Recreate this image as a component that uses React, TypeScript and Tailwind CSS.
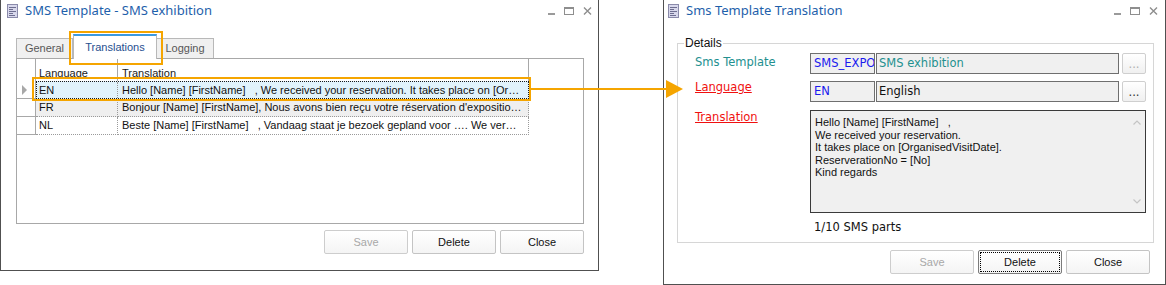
import React from "react";

const T = "font-['Liberation_Sans',Arial,sans-serif] text-[11px]";
const V = "font-['DejaVu_Sans',Verdana,sans-serif] text-[11.5px]";
const TITLE = "font-['Noto_Sans',sans-serif] text-[13px] text-[#1e5fab]";

function DocIcon() {
  return (
    <svg width="11" height="14" viewBox="0 0 11 14" className="shrink-0">
      <rect x="0.5" y="0.5" width="10" height="13" fill="#d8d8ec" stroke="#8a8aaa" />
      <path d="M2 3.5h7M2 5.5h4M2 7.5h7M2 9.5h4M2 11.5h6" stroke="#6e6e90" strokeWidth="1" />
    </svg>
  );
}

function Controls() {
  return (
    <div className="flex items-center">
      <svg width="8" height="10" viewBox="0 0 8 10">
        <rect x="0" y="7" width="7" height="2" fill="#9a9a9a" />
      </svg>
      <svg width="10" height="10" viewBox="0 0 10 10" className="ml-[8px]">
        <rect x="0.5" y="1.5" width="9" height="7" fill="none" stroke="#8e8e8e" />
        <rect x="0" y="1" width="10" height="2" fill="#8e8e8e" />
      </svg>
      <svg width="9" height="10" viewBox="0 0 9 10" className="ml-[9px]">
        <path d="M1 1.5l7 7M8 1.5l-7 7" stroke="#8e8e8e" strokeWidth="1.4" />
      </svg>
    </div>
  );
}

function Btn({
  label,
  disabled,
  focused,
}: {
  label: string;
  disabled?: boolean;
  focused?: boolean;
}) {
  return (
    <div
      className={`w-[84px] h-[24px] flex items-center justify-center rounded-[2px] border bg-linear-to-b from-white to-[#f4f4f4] ${T} ${
        disabled ? "text-[#a8a8a8] border-[#cdcdcd]" : "text-[#111]"
      } ${focused ? "border-[#7c7c7c] outline-1 outline-dotted outline-black outline-offset-[-3px]" : disabled ? "" : "border-[#c4c4c4]"}`}
    >
      {label}
    </div>
  );
}

const rows = [
  {
    lang: "EN",
    text: "Hello [Name] [FirstName]   , We received your reservation. It takes place on [Or…",
  },
  {
    lang: "FR",
    text: "Bonjour [Name] [FirstName], Nous avons bien reçu votre réservation d'expositio…",
  },
  {
    lang: "NL",
    text: "Beste [Name] [FirstName]   , Vandaag staat je bezoek gepland voor …. We ver…",
  },
];

function LeftWindow() {
  return (
    <div className="w-[599px] h-[271px] shrink-0 border-x border-b border-[#505050] flex flex-col">
      <div className="h-[22px] flex items-center pl-[6px] pr-[6px]">
        <DocIcon />
        <span className={`ml-[7px] ${TITLE} whitespace-nowrap`}>SMS Template - SMS exhibition</span>
        <div className="ml-auto">
          <Controls />
        </div>
      </div>
      <div className="mt-[12px] ml-[15px] mr-[14px]">
        <div className="h-[24px] flex items-end">
          <div className={`w-[57px] h-[20px] border-t border-x border-[#b8b8b8] bg-[#f0f0f0] flex items-center justify-center text-[#575757] ${T}`}>
            General
          </div>
          <div className={`relative z-10 -mb-[1px] w-[84px] h-[25px] border-x border-[#b8b8b8] border-t-2 border-t-[#3a9ae2] bg-white flex items-center justify-center pb-[1px] text-[#1f4f8f] ${T}`}>
            Translations
          </div>
          <div className={`w-[57px] h-[20px] border-t border-r border-[#b8b8b8] bg-[#f0f0f0] flex items-center justify-center text-[#575757] ${T}`}>
            Logging
          </div>
        </div>
        <div className="h-[166px] border border-[#a8a8a8] bg-white">
          <div className={`h-[22px] flex ${T} text-[#1a1a1a]`}>
            <div className="w-[19px] h-full border-r border-[#a8a8a8]" />
            <div className="w-[82px] h-full border-r border-[#a8a8a8] pl-[3px] pt-[6px]">Language</div>
            <div className="w-[411px] h-full border-r border-[#a8a8a8] pl-[4px] pt-[6px]">Translation</div>
          </div>
          {rows.map((r, i) => (
            <div key={r.lang} className={`h-[18px] flex ${T} text-[#111]`}>
              <div className="w-[19px] h-full border-r border-b border-[#a8a8a8] flex items-center pl-[5px]">
                {i === 0 && (
                  <svg width="6" height="10" viewBox="0 0 6 10">
                    <polygon points="0,0 5,5 0,10" fill="#a8a8a8" />
                  </svg>
                )}
              </div>
              {i === 0 ? (
                <div className="w-[493px] h-full flex border border-dotted border-[#1a1a1a] bg-[#e1f3fc]">
                  <div className="w-[81px] h-full border-r border-dotted border-[#9a9a9a] pl-[2px] flex items-center">
                    {r.lang}
                  </div>
                  <div className="flex-1 h-full pl-[4px] flex items-center whitespace-pre overflow-hidden">
                    {r.text}
                  </div>
                </div>
              ) : (
                <div className={`w-[493px] h-full flex ${i === 1 ? "bg-[#efefef]" : "bg-white"}`}>
                  <div className="w-[82px] h-full border-r border-b border-dotted border-[#9a9a9a] pl-[3px] flex items-center">
                    {r.lang}
                  </div>
                  <div className="w-[411px] h-full border-r border-b border-dotted border-[#9a9a9a] pl-[4px] flex items-center whitespace-pre overflow-hidden">
                    {r.text}
                  </div>
                </div>
              )}
            </div>
          ))}
        </div>
      </div>
      <div className="mt-[6px] flex justify-end gap-[4px] pr-[14px]">
        <Btn label="Save" disabled />
        <Btn label="Delete" />
        <Btn label="Close" />
      </div>
    </div>
  );
}

function Ellipsis({ enabled }: { enabled?: boolean }) {
  return (
    <div
      className={`w-[24px] h-[21px] rounded-[2px] border border-[#cfcfcf] bg-linear-to-b from-white to-[#f0f0f0] flex items-end justify-center pb-[3px] ${V} leading-[11px] ${
        enabled ? "text-[#333]" : "text-[#b0b0b0]"
      }`}
    >
      ...
    </div>
  );
}

function RightWindow() {
  return (
    <div className="ml-[64px] w-[503px] h-[285px] shrink-0 border-x border-b border-[#505050] flex flex-col">
      <div className="h-[22px] flex items-center pl-[4px] pr-[7px]">
        <DocIcon />
        <span className={`ml-[7px] ${TITLE} whitespace-nowrap`}>Sms Template Translation</span>
        <div className="ml-auto">
          <Controls />
        </div>
      </div>
      <div className="relative mt-[21px] ml-[13px] mr-[11px] h-[200px] border border-[#d6d6d6] flex flex-col pl-[17px] pr-[6px]">
        <span className={`absolute left-[6px] -top-[7px] bg-white px-[1px] leading-[13px] ${T} text-[12px] text-[#111]`}>
          Details
        </span>
        <div className="mt-[9px] h-[21px] flex">
          <div className={`w-[115px] pt-[3px] leading-[13px] ${V} text-[#23908f]`}>Sms Template</div>
          <div className={`w-[65px] h-[21px] border border-[#6f6f6f] bg-[#f0f0f0] pl-[3px] flex items-center overflow-hidden whitespace-nowrap ${V} text-[#1a1aee]`}>
            SMS_EXPO
          </div>
          <div className={`ml-[1px] w-[243px] h-[21px] border border-[#6f6f6f] bg-[#f0f0f0] pl-[2px] flex items-center ${V} text-[#23908f]`}>
            SMS exhibition
          </div>
          <div className="ml-[3px]">
            <Ellipsis />
          </div>
        </div>
        <div className="mt-[7px] h-[21px] flex">
          <div className={`w-[115px] pt-0 leading-[13px] ${V} text-[#f01010] underline`}>Language</div>
          <div className={`w-[65px] h-[21px] border border-[#6f6f6f] bg-[#f0f0f0] pl-[3px] flex items-center ${V} text-[#1a1aee]`}>
            EN
          </div>
          <div className={`ml-[1px] w-[243px] h-[21px] border border-[#6f6f6f] bg-[#f0f0f0] pl-[2px] flex items-center ${V} text-[#111]`}>
            English
          </div>
          <div className="ml-[3px]">
            <Ellipsis enabled />
          </div>
        </div>
        <div className="mt-[8px] flex">
          <div className={`w-[115px] pt-[1px] leading-[13px] ${V} text-[#f01010] underline`}>Translation</div>
          <div className="w-[336px] h-[103px] border border-[#3a3a3a] bg-[#f0f0f0] flex">
            <div className={`flex-1 pl-[4px] pt-[5px] leading-[12.5px] whitespace-pre ${T} text-[#111]`}>
              {"Hello [Name] [FirstName]   ,\nWe received your reservation.\nIt takes place on [OrganisedVisitDate].\nReserverationNo = [No]\nKind regards"}
            </div>
            <div className="w-[17px] flex flex-col items-center justify-between pt-[9px] pb-[8px]">
              <svg width="8" height="5" viewBox="0 0 8 5">
                <path d="M0.5 4.5L4 1l3.5 3.5" fill="none" stroke="#c4c4c4" strokeWidth="1.2" />
              </svg>
              <svg width="8" height="5" viewBox="0 0 8 5">
                <path d="M0.5 0.5L4 4l3.5-3.5" fill="none" stroke="#c4c4c4" strokeWidth="1.2" />
              </svg>
            </div>
          </div>
        </div>
        <div className={`mt-[7px] pl-[119px] leading-[14px] ${V} text-[#111]`}>1/10 SMS parts</div>
      </div>
      <div className="mt-[7px] flex justify-end gap-[4px] pr-[15px]">
        <Btn label="Save" disabled />
        <Btn label="Delete" focused />
        <Btn label="Close" />
      </div>
    </div>
  );
}

export default function App() {
  return (
    <div className="relative w-[1166px] h-[285px] bg-white flex overflow-hidden">
      <LeftWindow />
      <RightWindow />
      <div className="absolute left-[69px] top-[31px] w-[94px] h-[34px] border-2 border-[#f5a500]" />
      <div className="absolute left-[32px] top-[77px] w-[499px] h-[24px] border-2 border-[#f5a500]" />
      <svg className="absolute left-[530px] top-[79px]" width="155" height="21" viewBox="0 0 155 21">
        <rect x="0" y="9" width="140" height="2" fill="#f5a500" />
        <polygon points="136,1 153,10 136,19" fill="#f5a500" />
      </svg>
    </div>
  );
}
